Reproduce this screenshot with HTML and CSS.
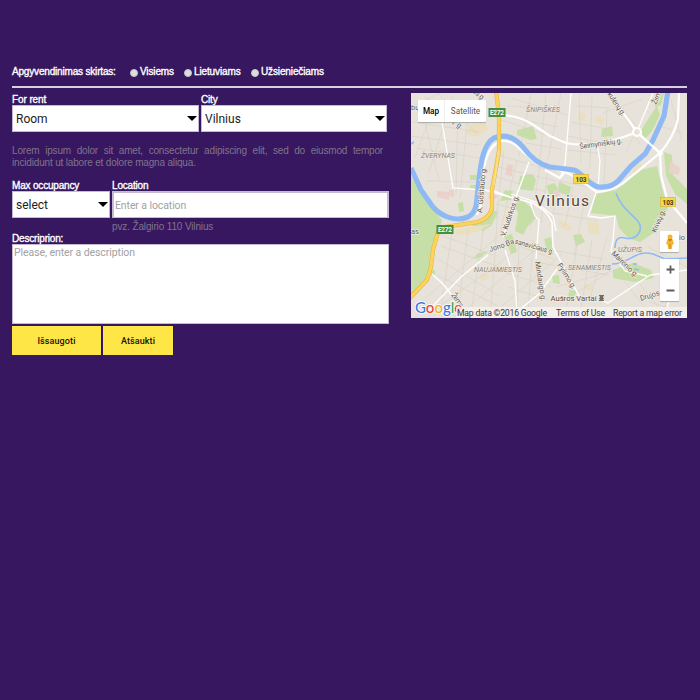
FILE: index.html
```html
<!DOCTYPE html>
<html lang="lt">
<head>
<meta charset="utf-8">
<title>Apgyvendinimas</title>
<link rel="stylesheet" href="styles.css">
</head>
<body>
<main class="page">
  <div class="audience">
    <span class="audience-title">Apgyvendinimas skirtas:</span>
    <label class="option visiems"><input type="radio" name="aud"><span>Visiems</span></label>
    <label class="option lietuviams"><input type="radio" name="aud"><span>Lietuviams</span></label>
    <label class="option uzsienieciams"><input type="radio" name="aud"><span>Užsieniečiams</span></label>
  </div>
  <div class="columns">
    <form class="form">
      <div class="row">
        <label class="field rent"><span class="caption">For rent</span><span class="pick"><select><option>Room</option></select></span></label>
        <label class="field city"><span class="caption">City</span><span class="pick"><select><option>Vilnius</option></select></span></label>
      </div>
      <p class="note">Lorem ipsum dolor sit amet, consectetur adipiscing elit, sed do eiusmod tempor incididunt ut labore et dolore magna aliqua.</p>
      <div class="row">
        <label class="field occupancy"><span class="caption">Max occupancy</span><span class="pick"><select><option>select</option></select></span></label>
        <label class="field location"><span class="caption">Location</span><input class="text" type="text" placeholder="Enter a location"><span class="hint">pvz. Žalgirio 110 Vilnius</span></label>
      </div>
      <label class="field description"><span class="caption">Descriprion:</span><textarea placeholder="Please, enter a description"></textarea></label>
      <div class="actions">
        <button class="save" type="button">Išsaugoti</button>
        <button class="cancel" type="button">Atšaukti</button>
      </div>
    </form>
    <div class="map">
      <svg class="canvas" viewBox="411 93 276 225" width="276" height="225">
        <rect x="411" y="93" width="276" height="225" fill="#e8e3da"/>
        <!-- parks -->
        <g fill="#c5dfa7">
          <path d="M411 176 421 193 432 208 442 220 440 228 434 240 430 268 425 281 411 296Z"/>
          <path d="M596 194 616 190 640 170 657 166 662 188 668 207 662 220 655 232 640 242 628 238 619 228 616 216 591 213Z"/>
          <path d="M664 152l8 3 1 20 14 14v15l-12-10-9-18zM517 130l16-4 4 13-7 1-13-5z"/>
          <path d="M520 176l12-2 4 6-3 11-15-2zM514 204l8-4 12 10 2 8-8 8-5 9-8-4 3-18zM468 223l18-3 7-10 5 2-7 14-8 5z"/>
          <path d="M470 175h8v5h-8zM470 185h8v4h-8zM458 203l5-1 1 9-5 1zM505 190l8 1-2 9-11 1zM602 129l10-3 1 10-12 1zM650 116l7-10 3 9-8 16-7 8-5-7zM656 93h8l-3 12-6 3z"/>
          <path d="M546 186l8-3 4 5-3 8-6-2zM559 182l12 5-2 9-11-4zM504 236l8-2 5 18-6 2zM544 239l7-2 2 12-6 2zM573 235l8-1 4 8-9 4zM613 270l20-7 18 7 3 8-20 4-21-4zM552 276l7-1 1 9-7-1zM570 290l7 1-4 8-5-2zM477 254l10-3-5 6-8 2zM430 270h5v6h-5z"/>
        </g>
        <g fill="#eadfc1"><path d="M470 125l15-4 3 9-12 7-11-4zM579 112l7 2-1 7-7-1zM597 116l8 3-4 6-7-4zM634 166l8-2-2 8-7 3zM487 273l3 3-8 6-3-6zM587 221l11 2 2 12-11-1zM559 219l13 8-1 5-12-5zM455 230l20-4 16-2-13 8-21 4zM536 260l9 2-3 6-7-2zM585 284l8 1-1 6-8-2z"/></g>
        <g fill="#ead1c9"><path d="M437 191l12 1v8l-12-3zM449 190l5 0v7l-5-1zM490 192l8 4-5 5-5-3zM507 164l6 1-1 11-7-1zM670 161l10 7-1 7-10-2zM555 189l6 6-5 3-3-6z"/></g>
        <!-- minor streets -->
        <g class="lanes" fill="none" stroke="#d6d0c6" stroke-width=".6">
          <path d="M413 122l66 10M411 136l68 9M416 148l64 10M426 181l51 1M422 110l17 71M458 103l-2 90M468 112l-8 86M415 158l17-47M424 97l42 23M411 107l29-14M438 93l38 40M429 172l24-76"/>
          <path d="M508 106l52 3M512 118l46 9M526 143l35 6M531 94l-12 62M546 93l-6 66M561 93l-13 67M511 98l57 17M501 120l62 20M577 106l33 2M571 122l37 7M579 94l2 69M592 94l-2 75M607 108l-3 79M568 136l40 8M568 150l49 5M617 102l31 39M603 113l39-14M626 151l18-35M640 145l-25-46M671 100l11 41M659 126l24 7"/>
          <path d="M495 154l61 18M494 166l62 15M504 150l-8 70M517 160l-17 73M540 165l-10 64M548 168l-7 55M564 169l-14 56M497 177l49 15M496 204l38 10M559 181l39 8M557 190l36 13M553 213l45 8M573 187l-8 39M586 194l-12 62"/>
          <path d="M441 235l52 20M441 246l69 25M438 259l62 37M437 275l61 31M452 232l-11 75M468 230l-10 82M485 219l-13 88M498 210l-7 99M415 307l85-72M428 315l90-66M458 316l77-66M489 317l73-63M506 241l48 18M507 273l44 14M508 287l40 13M519 243l-2 72M533 240l-5 74M541 248l62 11M541 263l68 12M556 287l60-17M564 300l44-27M578 240l-11 66M592 240l-11 69M607 237l-17 62M624 281l25 32M638 282l22 27M671 256l-9 48M681 258l-19 57M648 247l39 20M649 302l36 10"/>
        </g>
        <!-- streets -->
        <g fill="none" stroke="#fff" stroke-width="1.3">
          <path d="M442 122 453 188 485 190 510 197M571 93 565 165 560 178M597 143l3 18-2 27M653 93l-15 36M427 312l34-35 27-22M505 250l10 31 2 31M519 310l20-16 18-25M556 231l-3-15-17-14-25-8M530 202l5 14 4 4-3 39M596 193l-8 23 13 2 14-2-2 25-2 10 14 20 22 5M687 270l-37 5-42 28-8-3M672 291l-8 27"/>
        </g>
        <!-- main roads -->
        <g fill="none" stroke="#fff" stroke-width="2.2">
          <path d="M503 115Q523 117 535 126L550 136 566 143Q595 149 637 132L660 153M609 93l28 39M660 153 661 175 667 199 687 223M660 153Q674 137 678 119L679 93"/>
          <path d="M477 215Q484 202 483 175 486 145 502 141 512 140 521 150L536 163 565 172 560 178 545 170M565 172 577 178 597 192Q610 191 622 184L660 153"/>
          <path d="M432 274 443 284 465 312M494 191 510 197 533 203Q550 213 552 223L553 247 566 271 579 296M529 162 517 194 507 225 503 237" stroke-width="1.5"/>
          <circle cx="637" cy="132" r="4" fill="#e8e3da"/><circle cx="660" cy="153" r="1.5" fill="#e8e3da"/>
        </g>
        <!-- river -->
        <path d="M411 168 421 190 433 207C442 217 456 222 468 217 479 211 476 199 479 180 481 160 484 144 494 138 506 133 516 139 523 147 531 158 541 165 550 167L574 170C584 174 589 186 599 187Q612 188 619 180L631 166 645 154 653 140 664 116 668 91" fill="none" stroke="#8fb9f4" stroke-width="5.2"/>
        <path d="M411 144l3-2M616 193c4 12 12 18 21 27 8 9 0 21-12 18-7-2-10 2-10 10M612 264c18 0 23-15 41-10l12 5 22-1M629 265l2 2M634 269l5 1M633 264h4" fill="none" stroke="#8fb9f4" stroke-width="1.6"/>
        <path d="M642 147 660 153" stroke="#fff" stroke-width="0"/>
        <path d="M639 134 660 153" stroke="#fff" stroke-width="2.2"/>
        <g fill="none"><path d="M496 91 499 115V151L492 190V208Q490 218 478 222L445 227 438 232 433 250 431 267 427 280 409 299" stroke="#e3b33c" stroke-width="4.2"/><path d="M496 91 499 115V151L492 190V208Q490 218 478 222L445 227 438 232 433 250 431 267 427 280 409 299" stroke="#fdd35b" stroke-width="3.2"/>
        <path d="M499 150 494 185" stroke="#f4e3a8" stroke-width="1.2"/></g>
        <!-- road shields -->
        <g class="shield"><rect x="488.500" y="108" width="17" height="9" fill="#45903a"/><text class="light" x="490" y="115" textLength="14">E272</text><rect x="436.500" y="225" width="17" height="9" fill="#45903a"/><text class="light" x="438" y="232" textLength="14">E272</text></g>
        <g class="shield"><rect x="573.5" y="174.500" width="15" height="9" fill="#f7d846" stroke="#d6ae2c" stroke-width=".6"/><text x="575.500" y="181.500" textLength="11">103</text><rect x="660.5" y="197.500" width="15" height="9" fill="#f7d846" stroke="#d6ae2c" stroke-width=".6"/><text x="662.500" y="204.500" textLength="11">103</text></g>
        <!-- names -->
        <g class="district"><text x="526" y="112" textLength="34">ŠNIPIŠKĖS</text><text x="421" y="157.500" textLength="34">ŽVĖRYNAS</text><text x="474" y="271.500" textLength="48">NAUJAMIESTIS</text><text x="568" y="269.500" textLength="43">SENAMIESTIS</text><text x="618" y="252" textLength="24">UŽUPIS</text></g>
        <text class="town" x="535" y="206" textLength="54">Vilnius</text>
        <g class="street">
          <text transform="translate(580 149) rotate(-8)" textLength="43" lengthAdjust="spacingAndGlyphs">Šeimyniškių g.</text>
          <text transform="translate(607 94) rotate(56)" textLength="27">kulėnų g.</text>
          <text transform="translate(656 105) rotate(-66)" textLength="14">Žirm</text>
          <text transform="translate(472 92) rotate(40)" textLength="14">os g.</text>
          <text transform="translate(446 117) rotate(40)" textLength="20">nių g.</text>
          <text transform="translate(482 213) rotate(-85)" textLength="46">A. Goštauto g.</text>
          <text transform="translate(505 237) rotate(-71)" textLength="43">V. Kudirkos g.</text>
          <text transform="translate(490 252) rotate(-19)" textLength="26">Jono Ba</text>
          <text transform="translate(514.500 243.500) rotate(16)" textLength="40" lengthAdjust="spacingAndGlyphs">sanavičiaus g.</text>
          <text transform="translate(535 262) rotate(81)" textLength="40">Mindaugo g.</text>
          <text transform="translate(557 265) rotate(58)" textLength="29">Pylimo g.</text>
          <text transform="translate(611 254) rotate(44)" textLength="34">Maironio g.</text>
          <text transform="translate(656 233) rotate(-67)" textLength="24">Krivių g.</text>
          <text transform="translate(641 301) rotate(-18)" textLength="20">Drujos</text>
          <text transform="translate(451 295) rotate(55)" textLength="16">Žema</text>
          <text x="411" y="110">bų</text><text x="411" y="234">as</text><text x="679" y="240">io</text>
          <text class="place" x="550.500" y="300.500" textLength="46" lengthAdjust="spacingAndGlyphs">Aušros Vartai</text>
        </g>
        <path d="M599 295h5v1.200h-1v1.500h1v1h-1v1h1v1.300h-5v-1.300h1v-1h-1v-1h1v-1.500h-1z" fill="#746a60"/>
        <text class="logo" x="415" y="313"><tspan fill="#3979e5">G</tspan><tspan fill="#e5483c">o</tspan><tspan fill="#f2b21b">o</tspan><tspan fill="#3979e5">g</tspan><tspan fill="#36a655">l</tspan><tspan fill="#e5483c">e</tspan></text>
        <rect x="456" y="307" width="231" height="11" fill="#f5f3ef" opacity=".8"/>
        <g class="legal"><text x="457" y="315.700" textLength="90">Map data ©2016 Google</text><text x="556" y="315.700" textLength="49">Terms of Use</text><text x="613" y="315.700" textLength="69">Report a map error</text></g>
      </svg>
      <div class="map-type"><span class="active">Map</span><span>Satellite</span></div>
      <div class="map-tools">
        <div class="tool"><svg width="10" height="16" viewBox="0 0 10 16"><circle cx="5" cy="3" r="2.500" fill="#f5b52b"/><path d="M2.500 5.300h5L9 10l-1.500.5L6.700 15H3.300l-.8-4.500L1 10z" fill="#f5b52b"/><path d="M3 5.500h4L5 7zM5 10v5" stroke="#c57b1d" fill="#c57b1d" stroke-width=".8"/></svg></div>
        <div class="tool zoom"><svg width="19" height="42" viewBox="0 0 19 42"><path d="M6.500 10.500h8M10.500 6.500v8M6.500 31.500h8" stroke="#5d5d5d" stroke-width="1.800"/></svg></div>
      </div>
    </div>
  </div>
</main>
</body>
</html>
```

FILE: styles.css
```css
* { box-sizing: border-box; }
body { margin: 0; background: #37175f; color: #fff; font-family: "Liberation Sans", Arial, sans-serif; font-size: 10px; }
.page { width: 675px; margin-left: 12px; padding-top: 58px; }
.audience { display: flex; height: 30px; padding-top: 7px; border-bottom: 2px solid #d8cfe0; line-height: 14px; white-space: nowrap; -webkit-text-stroke: .35px #fff; }
.audience-title { width: 118px; letter-spacing: -.18px; }
.option { display: flex; }
.option input { appearance: none; flex: none; width: 8px; height: 8px; margin: 4px 2px 0 0; border-radius: 50%; background: #dedede; border: 1px solid #c9c5cc; }
.visiems { width: 54px; }
.lietuviams { width: 67px; }
.option span { letter-spacing: -.13px; }
.columns { display: flex; justify-content: space-between; padding-top: 5px; }
.form { width: 377px; }
.row { display: flex; gap: 2px; }
.field { display: block; }
.rent { width: 187px; }
.city { width: 186px; }
.occupancy { width: 98px; }
.location { width: 277px; }
.caption { display: block; height: 12px; line-height: 13px; white-space: nowrap; letter-spacing: -.18px; -webkit-text-stroke: .35px #fff; }
.rent .caption { letter-spacing: -.1px; }
.pick { display: block; position: relative; height: 27px; }
.pick::after { content: ""; position: absolute; right: 2px; top: 11px; border: 5px solid transparent; border-top-color: #000; border-bottom: 0; }
select { appearance: none; display: block; width: 100%; height: 27px; margin: 0; padding: 0 0 0 3px; background: #fff; color: #222; border: 1px solid #c6b9d2; border-radius: 0; font: 12px Roboto, sans-serif; }
.note { width: 371px; height: 24px; margin: 13px 0 10px; color: #80738c; line-height: 12px; text-align: justify; letter-spacing: -.17px; }
.note + .row { height: 53px; }
.text { display: block; width: 277px; height: 27px; margin: 0; padding: 1px 1px 0; border: 2px solid #c6b9d2; border-bottom-width: 1px; border-radius: 0; background: #fff; font: 10.5px Roboto, sans-serif; letter-spacing: -.1px; }
::placeholder { color: #a2a2a2; opacity: 1; }
.hint { display: block; line-height: 17px; color: #80738c; letter-spacing: -.14px; }
.description .caption { height: 12px; line-height: 14px; }
textarea { display: block; width: 377px; height: 80px; margin: 0; padding: 1px; border: 1px solid #c6b9d2; border-radius: 0; background: #fff; resize: none; font: 10.5px/14px Roboto, sans-serif; letter-spacing: -.08px; }
.actions { display: flex; gap: 2px; padding-top: 2px; }
button { height: 29px; padding: 0; border: 0; background: #ffe647; color: #17120a; font: 500 9px Roboto, sans-serif; letter-spacing: .1px; box-shadow: 1px 0 #2a1247; }
.save { width: 89px; }
.cancel { width: 70px; }
.map { position: relative; width: 276px; height: 225px; overflow: hidden; font-family: Roboto, sans-serif; }
.canvas { display: block; }
.canvas text { font-family: Roboto, sans-serif; }
.shield text { font-size: 6.5px; font-weight: 700; fill: #3d3924; }
.shield .light { fill: #fff; }
.district text { font-size: 7.2px; font-style: italic; fill: #8c8275; stroke: #eee9e0; stroke-width: 1px; paint-order: stroke; }
.town { font-size: 15.5px; fill: #51463d; stroke: #f3efe8; stroke-width: 2px; paint-order: stroke; }
.street text { font-size: 7.4px; fill: #62584f; stroke: #f3efe8; stroke-width: 1.3px; paint-order: stroke; }
.street .place { font-size: 8px; fill: #554a41; }
.canvas .logo { font-family: Lato, sans-serif; font-size: 15px; font-weight: 500; stroke: #fff; stroke-width: 1.5px; paint-order: stroke; }
.legal text { font-size: 8.7px; fill: #373737; }
.map-type { position: absolute; left: 7px; top: 7px; display: flex; height: 22px; background: #fff; color: #555; line-height: 22px; font-size: 8.2px; text-align: center; border-radius: 1px; box-shadow: 0 1px 1px #aaa; }
.map-type span { width: 41px; }
.map-type .active { width: 27px; color: #000; font-weight: 500; border-right: 1px solid #eee; }
.map-tools { position: absolute; right: 8px; top: 138px; display: grid; gap: 7px; }
.tool { display: grid; place-items: center; width: 19px; height: 21px; background: #fff; border-radius: 1px; box-shadow: 0 1px 1px #aaa; }
.zoom { height: 42px; }
```
